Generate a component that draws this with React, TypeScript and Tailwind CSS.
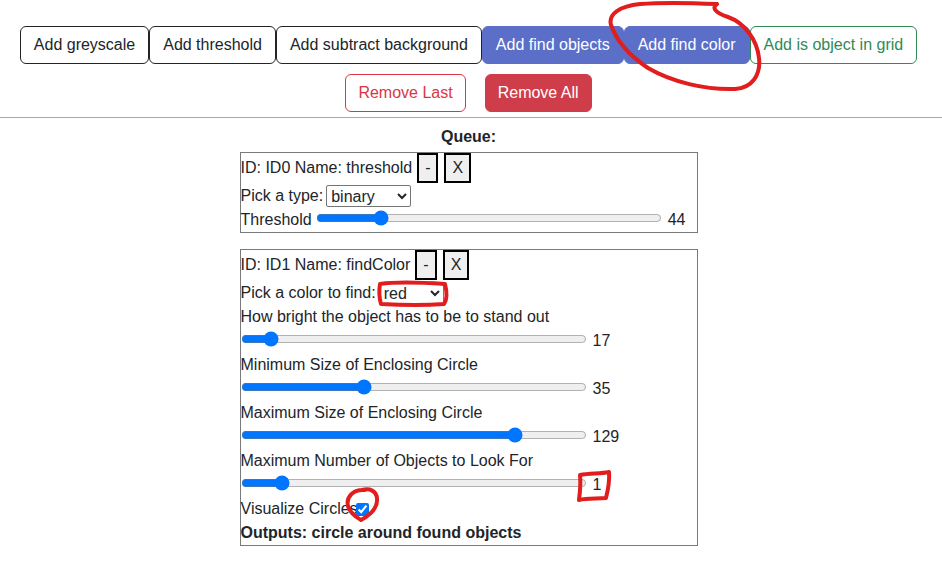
const font = { fontFamily: '"Liberation Sans", Arial, sans-serif' }

const addButtons = [
  { label: "Add greyscale", cls: "border-[#212529] text-[#212529] bg-white" },
  { label: "Add threshold", cls: "border-[#212529] text-[#212529] bg-white" },
  { label: "Add subtract background", cls: "border-[#212529] text-[#212529] bg-white" },
  { label: "Add find objects", cls: "border-[#5b6fc9] text-white bg-[#5b6fc9]" },
  { label: "Add find color", cls: "border-[#5b6fc9] text-white bg-[#5b6fc9]" },
  { label: "Add is object in grid", cls: "border-[#2f8a55] text-[#2f8a55] bg-white" },
]

const Slider = ({ value, max }: { value: number; max: number }) => (
  <>
    <input
      type="range"
      min={0}
      max={max}
      defaultValue={value}
      className="w-[346px] mx-[0px] align-middle -translate-y-[3px] accent-[#0075ff]"
    />
    <span className="ml-[6px] inline-block">{value}</span>
  </>
)

const IdRow = ({ id, name }: { id: string; name: string }) => (
  <div className="flex items-start h-[31px]">
    <span className="leading-[30px]">ID: {id} Name: {name}</span>
    <button className="ml-[5px] h-[30px] px-[6px] border-2 border-black bg-[#efefef]">-</button>
    <button className="ml-[6px] h-[30px] px-[6px] border-2 border-black bg-[#efefef]">X</button>
  </div>
)

const Select = ({ value, options, width }: { value: string; options: string[]; width: string }) => (
  <select
    defaultValue={value}
    className={`ml-[3px] h-[22px] border border-[#767676] rounded-[2px] bg-white text-base leading-none ${width}`}
  >
    {options.map((o) => (
      <option key={o} value={o}>{o}</option>
    ))}
  </select>
)

const App = () => {
  return (
    <div className="relative w-[942px] h-[582px] bg-white overflow-hidden text-[#212529]" style={font}>
      <div className="w-[937px] pt-[26px]">
        <div className="flex justify-center">
          {addButtons.map((b) => (
            <button key={b.label} className={`h-[38px] px-[13px] border rounded-md text-base leading-6 ${b.cls}`}>
              {b.label}
            </button>
          ))}
        </div>
        <div className="flex justify-center gap-[19px] mt-[10px]">
          <button className="h-[38px] px-3 border border-[#dc3545] text-[#dc3545] bg-white rounded-md text-base">
            Remove Last
          </button>
          <button className="h-[38px] px-3 border border-[#cf3d4a] text-white bg-[#cf3d4a] rounded-md text-base">
            Remove All
          </button>
        </div>
      </div>
      <hr className="mt-[5px] border-t border-[#a9a9a9]" />
      <div className="w-[937px] text-base leading-6">
        <div className="mt-[7px] text-center font-bold">Queue:</div>
        <div className="mx-auto mt-[3px] w-[458px] border border-[#7a7a7a]">
          <IdRow id="ID0" name="threshold" />
          <div className="flex items-center h-[24px]">
            <span>Pick a type:</span>
            <Select value="binary" options={["binary", "binary_inv", "trunc"]} width="w-[85px]" />
          </div>
          <div className="h-[24px] whitespace-nowrap">
            <span className="mr-[4px]">Threshold</span>
            <Slider value={44} max={255} />
          </div>
        </div>
        <div className="mx-auto mt-[16px] w-[458px] border border-[#7a7a7a]">
          <IdRow id="ID1" name="findColor" />
          <div className="flex items-center h-[24px]">
            <span>Pick a color to find:</span>
            <Select value="red" options={["red", "green", "blue"]} width="w-[65px]" />
          </div>
          <div>How bright the object has to be to stand out</div>
          <div className="h-[24px] whitespace-nowrap"><Slider value={17} max={255} /></div>
          <div>Minimum Size of Enclosing Circle</div>
          <div className="h-[24px] whitespace-nowrap"><Slider value={35} max={100} /></div>
          <div>Maximum Size of Enclosing Circle</div>
          <div className="h-[24px] whitespace-nowrap"><Slider value={129} max={160} /></div>
          <div>Maximum Number of Objects to Look For</div>
          <div className="h-[24px] whitespace-nowrap"><Slider value={1} max={10} /></div>
          <div className="flex items-center h-[24px]">
            <span>Visualize Circles</span>
            <input type="checkbox" defaultChecked className="ml-[-2px] w-[13px] h-[13px] accent-[#0075ff]" />
          </div>
          <div className="font-bold">Outputs: circle around found objects</div>
        </div>
      </div>

      {/* hand drawn red marks on top of the screenshot */}
      <svg className="absolute inset-0 pointer-events-none" width="942" height="582" viewBox="0 0 942 582" fill="none">
        <g stroke="#e11d1d" strokeWidth="4" strokeLinecap="round" strokeLinejoin="round">
          <path d="M717,4 C711,8 716,13 728,17 C745,23 757,40 759,58 C761,75 752,88 735,89 C705,90 672,82 648,68 C630,56 617,42 611,25 C608,14 620,6 640,4 C665,2 695,3 717,4" />
          <path d="M380,284 C400,281 430,283 445,284 C447,292 447,300 444,304 C420,306 398,305 381,304 C379,297 379,290 380,284 Z" />
          <path d="M580,475 C590,473 600,474 609,472 C610,482 608,490 606,498 C597,499 588,498 579,500 C580,492 581,484 580,475 Z" />
          <path d="M365,490 C352,489 346,498 348,506 C350,514 358,518 361,520 C372,514 378,507 377,498 C376,491 370,488 362,490" />
        </g>
      </svg>
    </div>
  )
}

export default App
